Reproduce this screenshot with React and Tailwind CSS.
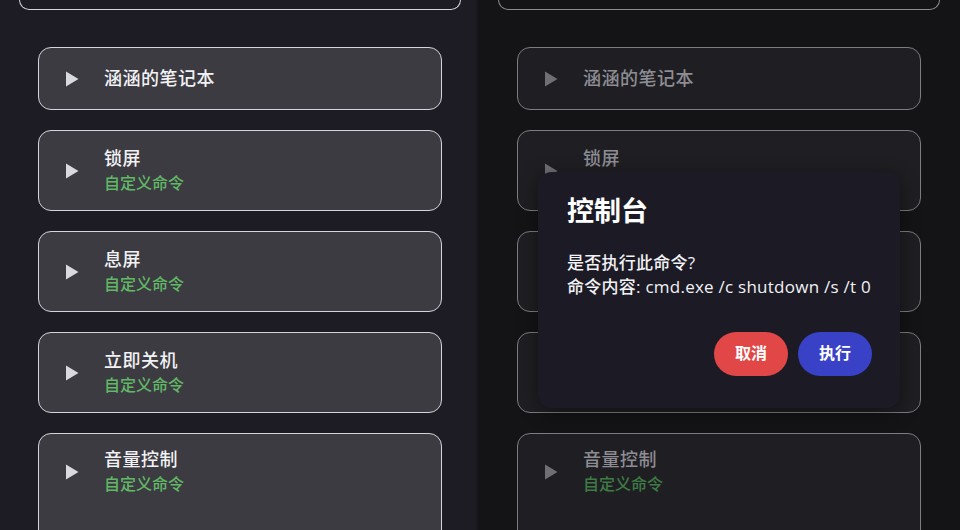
import React from "react";

const FONT = { fontFamily: "Roboto, 'Noto Sans CJK SC', 'Noto Sans', sans-serif" };
const BODY = { fontFamily: "'Open Sans', 'Noto Sans CJK SC', sans-serif" };

function Triangle({ color }) {
  return (
    <svg width="14" height="16" viewBox="0 0 14 16" className="shrink-0">
      <path d="M1 0.5 L13.5 8 L1 15.5 Z" fill={color} />
    </svg>
  );
}

function Card({ title, sub, dim, tall }) {
  const wrap = dim
    ? "bg-[#1f1f23] border-[#7c7c82]"
    : "bg-[#3b3b41] border-[#d4d4dc]";
  const titleC = dim ? "text-[#8d8d93]" : "text-[#f2f2f5]";
  const subC = dim ? "text-[#3e7b45]" : "text-[#62b866]";
  return (
    <div
      className={`w-[404px] shrink-0 rounded-[13px] border-[1.5px] ${wrap} ${
        tall ? "h-[140px] pt-[13px]" : sub ? "h-[81px] justify-center" : "h-[63px] justify-center"
      } pl-[26px] flex flex-col`}
    >
      <div className="flex items-center">
        <Triangle color={dim ? "#6f6f75" : "#d9d9e1"} />
        <div className="ml-[25px] flex flex-col">
          <div
            className={`text-[18px] ${sub ? "leading-[25px]" : "leading-[28px]"} font-medium tracking-[0.5px] ${titleC}`}
            style={FONT}
          >
            {title}
          </div>
          {sub && (
            <div className={`text-[16px] leading-[25px] font-medium ${subC}`} style={FONT}>
              {sub}
            </div>
          )}
        </div>
      </div>
    </div>
  );
}

const items = [
  { title: "涵涵的笔记本" },
  { title: "锁屏", sub: "自定义命令" },
  { title: "息屏", sub: "自定义命令" },
  { title: "立即关机", sub: "自定义命令" },
  { title: "音量控制", sub: "自定义命令", tall: true },
];

function Panel({ dim }) {
  return (
    <div className="flex flex-col">
      <div
        className={`h-[10px] w-[442px] shrink-0 rounded-b-[13px] border-x-[1.5px] border-b-[1.5px] ${
          dim ? "ml-[20px] border-[#8a8a90]" : "ml-[19px] border-[#d4d4dc]"
        }`}
      />
      <div className={`mt-[37px] flex flex-col gap-[20px] ${dim ? "ml-[39px]" : "ml-[38px]"}`}>
        {items.map((it, i) => (
          <Card key={i} {...it} dim={dim} />
        ))}
      </div>
    </div>
  );
}

export default function App() {
  return (
    <div className="flex w-[960px] h-[530px] overflow-hidden bg-[#141416]" style={FONT}>
      <div className="w-[476px] h-full shrink-0 bg-[#1d1c25] overflow-hidden">
        <Panel />
      </div>
      <div className="w-[2px] h-full shrink-0 bg-[#18171d]" />
      <div className="relative flex-1 h-full bg-[#141416] overflow-hidden">
        <Panel dim />
        <div className="absolute left-[60px] top-[172px] w-[362px] rounded-[14px] bg-[#1c1b25] pt-[24px] pb-[32px] pl-[29px] pr-[28px] shadow-[0_4px_20px_rgba(0,0,0,0.45)]">
          <div className="text-[27px] leading-[32px] font-semibold text-white" style={FONT}>
            控制台
          </div>
          <div className="mt-[23px] text-[17px] leading-[24px] font-medium whitespace-nowrap tracking-[0.25px] text-[#f2f2f5]" style={BODY}>
            <div>是否执行此命令?</div>
            <div>命令内容: cmd.exe /c shutdown /s /t 0</div>
          </div>
          <div className="mt-[33px] flex justify-end gap-[10px]">
            <button className="w-[74px] h-[44px] rounded-full bg-[#e14747] text-white text-[16px] font-bold" style={FONT}>
              取消
            </button>
            <button className="w-[74px] h-[44px] rounded-full bg-[#3942c6] text-white text-[16px] font-bold" style={FONT}>
              执行
            </button>
          </div>
        </div>
      </div>
    </div>
  );
}
